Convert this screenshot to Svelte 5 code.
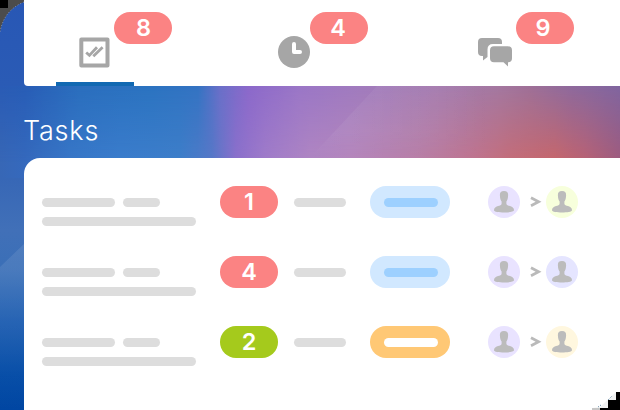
<script>
  const tabs = [
    { icon: 'check', count: 8, active: true },
    { icon: 'clock', count: 4, active: false },
    { icon: 'chat', count: 9, active: false }
  ];
  const rows = [
    { count: 1, tone: 'red', status: 'blue', to: 'lime' },
    { count: 4, tone: 'red', status: 'blue', to: 'indigo' },
    { count: 2, tone: 'green', status: 'orange', to: 'yellow' }
  ];
</script>

{#snippet avatar(color)}
  <span class="avatar {color}">
    <svg width="32" height="32" viewBox="0 0 32 32">
      <path fill="#bcbcbc" d="M16 5c3.200 0 4.300 1.500 4.100 4.500-.1 3-.8 4.700-1.700 6v2.300c.3 1.500 1.600 1.700 3.600 2.300 2.800.8 4 2.300 4 4.200 0 1.600-5 2.200-10 2.200s-10-.6-10-2.200c0-1.900 1.200-3.400 4-4.200 2-.6 3.300-.8 3.600-2.300v-2.300c-.9-1.300-1.600-3-1.700-6C11.700 6.500 12.800 5 16 5z" />
    </svg>
  </span>
{/snippet}

<div class="screen">
  <nav class="tabs">
    {#each tabs as tab}
      <div class="tab {tab.icon}" class:active={tab.active}>
        {#if tab.icon === 'check'}
          <svg class="icon" width="36" height="36" viewBox="0 0 36 36">
            <rect x="5.300" y="5.500" width="26.200" height="26" fill="none" stroke="#a6a6a6" stroke-width="4" stroke-linejoin="round" />
            <g fill="none" stroke="#a6a6a6" stroke-width="2.800">
              <path d="M10.200 18.500l3.200 2.900 7.600-8.200M17.300 22.200l9.300-9" />
            </g>
          </svg>
        {:else if tab.icon === 'clock'}
          <svg class="icon" width="36" height="36" viewBox="0 0 36 36">
            <circle cx="18" cy="18" r="16" fill="#a6a6a6" />
            <path d="M18 10v8h6" fill="none" stroke="#fff" stroke-width="4" stroke-linecap="round" stroke-linejoin="round" />
          </svg>
        {:else}
          <svg class="icon" width="36" height="36" viewBox="0 0 36 36">
            <path fill="#a6a6a6" d="M5 4h16q4 0 4 4v2H16q-5.500 0-5.500 5.500V23L6 26.500V22H5q-4 0-4-4V8q0-4 4-4z" />
            <path fill="#a6a6a6" d="M17 12.300h14q4 0 4 4v8q0 4-4 4V32.500L26.500 28.300H17q-4 0-4-4v-8q0-4 4-4z" />
          </svg>
        {/if}
        <span class="count red">{tab.count}</span>
      </div>
    {/each}
  </nav>

  <h1>Tasks</h1>

  <main class="panel">
    {#each rows as row}
      <div class="row">
        <div class="lines">
          <div class="line-pair"><i class="bar first"></i><i class="bar second"></i></div>
          <i class="bar full"></i>
        </div>
        <span class="count {row.tone}">{row.count}</span>
        <i class="bar mid"></i>
        <span class="status {row.status}"><i class="bar"></i></span>
        <div class="people">
          {@render avatar('violet')}
          <svg class="arrow" width="12" height="12" viewBox="0 0 12 12"><path d="M1 1.800l7.600 4L1 9.800" fill="none" stroke="#bababa" stroke-width="2.700" /></svg>
          {@render avatar(row.to)}
        </div>
      </div>
    {/each}
  </main>

  <svg class="corner start" width="24" height="32" viewBox="0 0 24 32">
    <path d="M0 0h24v2Q4 10 0 32z" fill="#4c4c4c" />
    <path d="M0 0h8v8H0z" />
    <path d="M24 2Q4 10 0 32" fill="none" stroke="#a8b5d0" stroke-width=".7" stroke-dasharray="1 2" />
  </svg>
  <svg class="corner end" width="28" height="18" viewBox="0 0 28 18">
    <path d="M0 18v-2l8-1L24 0v18z" fill="#f1f2f2" />
    <path d="M24 0h4v18H8v-2h8V8h8z" />
    <path d="M0 16h8v2H0z" fill="#c6c6c6" />
    <path d="M16 8l4-4M6 15l3-2" stroke="#5682a4" stroke-dasharray="1 1.500" />
  </svg>
</div>

<style>
  :global(body) { margin: 0; }
  .screen {
    position: relative;
    width: 620px;
    height: 410px;
    box-sizing: border-box;
    overflow: hidden;
    padding-left: 24px;
    display: flex;
    flex-direction: column;
    color: #fff;
    font-family: Inter, sans-serif;
    background: linear-gradient(180deg, #2857b5 0, #2a5bb5 86px, #3767b6 178px, #4170b8 230px, #3a6fb7 270px, #1c5cb0 320px, #034ba6 375px, #0046a2 410px);
  }
  .tabs {
    height: 86px;
    flex: none;
    display: flex;
    background: #fff;
    border-radius: 0 0 0 4px;
  }
  .tab {
    position: relative;
    width: 196px;
    box-sizing: border-box;
    display: flex;
    align-items: flex-start;
    padding: 12px 0 0 52px;
  }
  .clock, .chat { padding-left: 56px; }
  .chat { width: 204px; padding-left: 61px; }
  .icon { margin-top: 22px; flex: none; }
  .tab .count { margin-left: 2px; padding-left: 1px; }
  .clock .count { margin-left: -2px; padding: 0 2px 0 0; }
  .chat .count { margin-left: 3px; padding: 0 4px 0 0; }
  .active::after {
    content: '';
    position: absolute;
    left: 32px;
    bottom: 0;
    width: 78px;
    height: 4px;
    background: #1269b2;
  }
  .count {
    width: 58px;
    height: 32px;
    flex: none;
    border-radius: 16px;
    display: flex;
    align-items: center;
    justify-content: center;
    box-sizing: border-box;
    font-size: 23.500px;
    font-weight: 600;
    line-height: 32px;
  }
  .red { background: #fb8383; }
  .green { background: #a5ca1c; }
  h1 {
    position: relative;
    isolation: isolate;
    box-sizing: border-box;
    height: 92px;
    margin: 0 0 -20px -24px;
    padding-left: 23px;
    flex: none;
    font: 300 27px/90px Inter, sans-serif;
    letter-spacing: .8px;
    background: linear-gradient(90deg, #3767b6 0, #3569bd 25px, #3877c8 70px, #3b7dcd 120px, #3e7fca 180px, #5678c8 212px, #8b70cc 236px, #a07cca 265px, #b086c3 310px, #b687bd 350px, #ba7fa6 420px, #c07590 470px, #c56d79 510px, #c7676c 555px, #b96274 585px, #9f5b7e 620px);
  }
  h1::before {
    content: '';
    position: absolute;
    inset: 0;
    z-index: -1;
    background: linear-gradient(90deg, #2a5bb5 0, #285db6 25px, #2a6ebd 80px, #2b73c0 150px, #3373c2 198px, #6a6fc8 220px, #8b68ca 248px, #9a76c6 300px, #a07bbd 360px, #a57caf 440px, #a3779f 500px, #9e7097 530px, #8e699c 570px, #80659f 620px);
    mask-image: linear-gradient(#000, transparent 76px);
  }
  h1::after {
    content: '';
    position: absolute;
    left: 310px;
    top: 0;
    width: 180px;
    height: 72px;
    z-index: -1;
    background: linear-gradient(90deg, #ffffff10, #ffffff0d 60px, transparent);
    clip-path: polygon(67px 0, 100% 0, 100% 100%, 0 100%);
    mask-image: linear-gradient(#000 45px, transparent 72px);
  }
  .panel {
    position: relative;
    flex: 1;
    min-height: 0;
    box-sizing: border-box;
    padding: 28px 0 0 18px;
    background: #fff;
    border-radius: 16px 0 0;
    display: flex;
    flex-direction: column;
    gap: 38px;
  }
  .panel::before {
    content: '';
    position: absolute;
    left: -24px;
    top: 86px;
    width: 24px;
    height: 166px;
    background: linear-gradient(#ffffff18, transparent);
    clip-path: polygon(100% 0, 100% 100%, 0 100%, 0 23px);
  }
  .row { height: 32px; display: flex; align-items: center; }
  .bar { display: block; height: 9px; border-radius: 5px; background: #ddd; }
  .lines { width: 154px; margin-right: 24px; padding-top: 20px; display: flex; flex-direction: column; gap: 10px; }
  .line-pair { display: flex; gap: 8px; }
  .first { width: 73px; }
  .second { width: 37px; }
  .mid { width: 52px; margin: 1px 24px 0 16px; }
  .status {
    width: 80px;
    height: 32px;
    box-sizing: border-box;
    padding: 12px 12px 0 14px;
    border-radius: 16px;
  }
  .blue { background: #d1e8ff; }
  .blue .bar { background: #9dd0ff; }
  .orange { background: #ffc875; }
  .orange .bar { background: #fff; }
  .people { display: flex; align-items: center; margin-left: 38px; }
  .avatar { width: 32px; height: 32px; border-radius: 50%; overflow: hidden; }
  .avatar svg { display: block; }
  .arrow { margin: 0 4px 0 10px; }
  .violet { background: #e9e3ff; }
  .lime { background: #f7ffdc; }
  .indigo { background: #e5e5ff; }
  .yellow { background: #fff7df; }
  .corner { position: absolute; display: block; }
  .start { left: 0; top: 0; }
  .end { right: 0; bottom: 0; }
</style>
